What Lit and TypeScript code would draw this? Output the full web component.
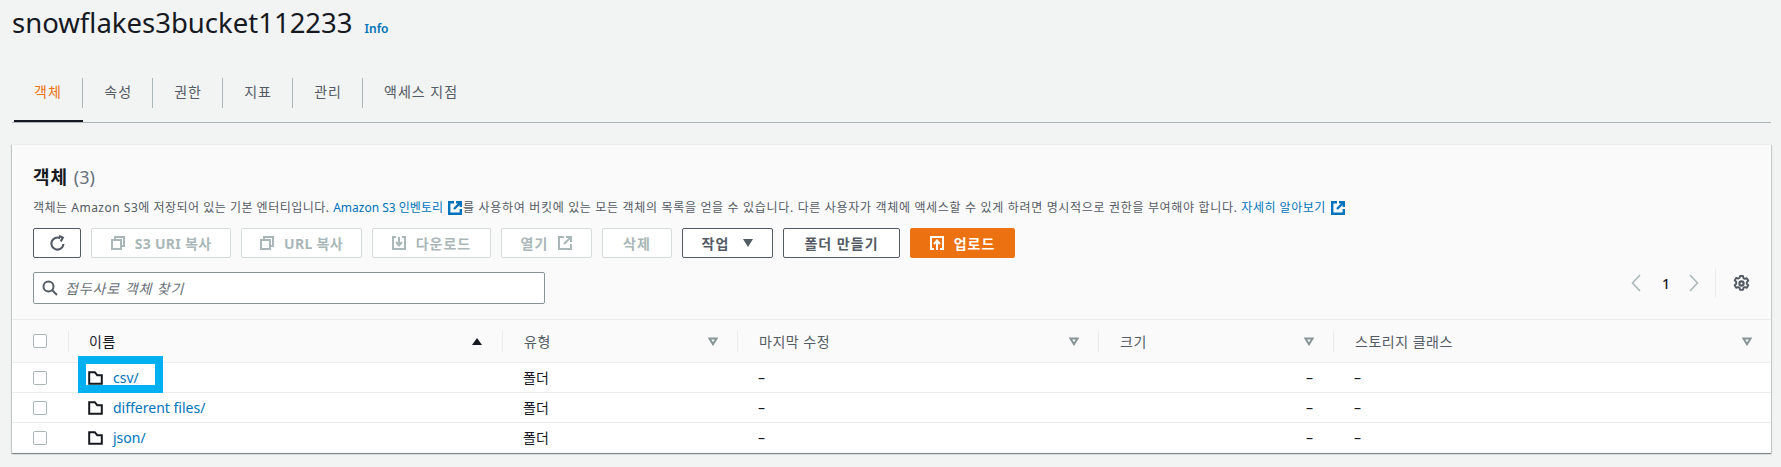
import { LitElement, html, css } from "lit";
import { customElement } from "lit/decorators.js";

const copyIcon = html`<svg class="ic" viewBox="0 0 14 14" fill="none" stroke="currentColor" stroke-width="2"><rect x="1" y="4" width="9" height="9"/><path d="M4 4V1h9v9h-3"/></svg>`;
const downloadIcon = html`<svg class="ic" viewBox="0 0 14 14" fill="none" stroke="currentColor" stroke-width="2"><path d="M4 1H1v12h12V1h-3"/><path d="M7 1v8M4 6l3 3.5L10 6"/></svg>`;
const extIcon = html`<svg class="ic" viewBox="0 0 14 14" fill="none" stroke="currentColor" stroke-width="2"><path d="M6 1H1v12h12V8"/><path d="M6 8l6.5-6.5M8 1h5v5"/></svg>`;
const extLink = html`<svg class="ext" viewBox="0 0 14 14" fill="none" stroke="currentColor" stroke-width="2.4"><path d="M6 1.2H1.2v11.6h11.6V8"/><path d="M6 8l6.5-6.5M8 1.2h4.8V6"/></svg>`;
const uploadIcon = html`<svg class="ic" viewBox="0 0 14 14" fill="none" stroke="currentColor" stroke-width="2"><path d="M4 13H1V1h12v12h-3"/><path d="M7 14V5M4 8l3-3.5L10 8"/></svg>`;
const folderIcon = html`<svg class="folder" viewBox="0 0 15 14" fill="none" stroke="currentColor" stroke-width="2"><path d="M1.2 1.2h5.6l2.4 3h4.6v8.6H1.2z" stroke-linejoin="miter"/></svg>`;
const filterIcon = html`<svg class="filter" viewBox="0 0 10 9" fill="none" stroke="currentColor" stroke-width="2"><path d="M1.5 1.5h7L5 7.2z"/></svg>`;

const tabs = ["객체", "속성", "권한", "지표", "관리", "액세스 지점"];
const rows = ["csv/", "different files/", "json/"];

@customElement("app-root")
export class AppRoot extends LitElement {
  static styles = css`
    :host {
      display: block;
      width: 1781px;
      height: 467px;
      overflow: hidden;
      box-sizing: border-box;
      padding: 0 10px 0 12px;
      background: #f2f3f3;
      color: #16191f;
      font-family: "Noto Sans", "Noto Sans CJK KR", sans-serif;
      font-size: 14px;
    }
    .title { display: flex; align-items: baseline; height: 78px; gap: 12px; padding-top: 3px; box-sizing: border-box; }
    h1 { margin: 0; font-size: 27.5px; font-weight: 400; line-height: 40px; }
    .info { font-size: 12px; font-weight: 600; color: #0073bb; }
    .tabs { display: flex; height: 44px; border-bottom: 1px solid #aab7b8; padding-left: 2px; }
    .tab { position: relative; height: 30px; line-height: 28px; padding: 0 19.7px 0 21.5px; border-right: 1px solid #aab7b8; color: #545b64; font-size: 14px; letter-spacing: 1px; white-space: nowrap; }
    .tab:first-child { padding: 0 20px; }
    .tab:last-child { border-right: none; }
    .tab.on { color: #ec7211; }
    .tab.on::after { content: ""; position: absolute; left: 0; right: -1px; top: 42px; height: 2px; background: #16191f; }
    .card { margin-top: 21px; height: 309px; background: #fafafa; box-shadow: 0 1px 1px rgba(0,28,36,.3), 1px 1px 1px rgba(0,28,36,.15), -1px 1px 1px rgba(0,28,36,.15); border-top: 1px solid #eaeded; box-sizing: border-box; }
    .head { padding: 20px 21px 0; height: 174px; box-sizing: border-box; }
    h2 { margin: 0; font-size: 18px; font-weight: 700; line-height: 24px; height: 24px; letter-spacing: 1px; }
    h2 span { font-weight: 400; color: #687078; letter-spacing: 0; }
    .desc { margin: 11px 0 0; font-size: 12px; line-height: 16px; color: #545b64; white-space: nowrap; height: 16px; letter-spacing: 0.5px; }
    .desc .tight { letter-spacing: 0; }
    .desc .wide { letter-spacing: .67px; }
    a { color: #0073bb; text-decoration: none; }
    .ext { width: 14px; height: 14px; color: #0073bb; vertical-align: -3px; margin: 0 1px 0 2px; }
    .btns { display: flex; gap: 10px; margin-top: 12px; }
    .btn { box-sizing: border-box; height: 30px; display: flex; align-items: center; justify-content: center; gap: 10px; border: 1px solid #545b64; border-radius: 2px; background: #fff; color: #545b64; font-size: 14px; font-weight: 700; white-space: nowrap; letter-spacing: 1px; }
    .btn.off { border-color: #d5dbdb; color: #aab7b8; }
    .btn.primary { background: #ec7211; border-color: #ec7211; color: #fff; }
    .btn.latin { letter-spacing: .3px; }
    .ic { width: 14px; height: 14px; flex: none; }
    .refresh { width: 17px; height: 17px; flex: none; }
    .tri { width: 0; height: 0; border-left: 5.5px solid transparent; border-right: 5.5px solid transparent; border-top: 8px solid #545b64; margin-left: 4px; }
    .w48 { width: 48px; } .w140 { width: 140px; } .w121 { width: 121px; } .w119 { width: 119px; } .w91 { width: 91px; } .w70 { width: 70px; } .w117 { width: 117px; } .w105 { width: 105px; }
    .find { display: flex; justify-content: space-between; margin-top: 14px; }
    .search { box-sizing: border-box; width: 512px; height: 32px; display: flex; align-items: center; gap: 7px; padding-left: 8px; background: #fff; border: 1px solid #879596; border-radius: 2px; color: #687078; font-style: italic; font-size: 14px; letter-spacing: .9px; }
    .search svg { width: 16px; height: 16px; color: #545b64; flex: none; }
    .pager { display: flex; align-items: center; height: 30px; margin-top: -4px; }
    .pager .chev { width: 10px; height: 18px; color: #aab7b8; }
    .pager b { font-weight: 500; font-size: 14px; width: 20px; text-align: center; margin: 0 13px 0 15px; }
    .pager i { width: 1px; height: 30px; background: #eaeded; margin: 0 17px 0 16px; }
    .gear { width: 17px; height: 17px; color: #545b64; }
    .row { display: grid; grid-template-columns: 56px 434px 235px 361px 235px 1fr; border-top: 1px solid #eaeded; box-sizing: border-box; align-items: center; }
    .row.hd { height: 43px; background: #fafafa; color: #545b64; }
    .row.body { height: 30px; background: #fff; color: #16191f; }
    .cb { box-sizing: border-box; width: 14px; height: 14px; border: 1px solid #aab7b8; border-radius: 2px; background: #fff; margin-left: 21px; }
    .th { display: flex; align-items: center; justify-content: space-between; height: 21px; padding: 0 19px 0 21px; border-left: 1px solid #eaeded; letter-spacing: .5px; }
    .th.dark { color: #16191f; padding: 0 20px; }
    .th .up { width: 0; height: 0; border-left: 5px solid transparent; border-right: 5px solid transparent; border-bottom: 7px solid #16191f; }
    .filter { width: 10px; height: 9px; color: #879596; }
    .td { padding: 0 0 2px 21px; white-space: nowrap; }
    .td.dash { padding: 0 0 0 21px; }
    .td.r { padding: 0 20px 0 0; text-align: right; }
    .name { position: relative; display: flex; align-items: center; gap: 10px; padding-left: 20px; height: 29px; }
    .name > * { position: relative; }
    .mark { position: absolute !important; left: 10px; top: -7px; width: 85px; height: 37px; box-sizing: border-box; border: 8px solid #00b0f0; background: #fff; }
    .folder { width: 15px; height: 14px; color: #16191f; flex: none; }
  `;

  render() {
    return html`
      <div class="title"><h1>snowflakes3bucket112233</h1><a class="info">Info</a></div>
      <div class="tabs">${tabs.map((t, i) => html`<div class="tab ${i === 0 ? "on" : ""}">${t}</div>`)}</div>
      <section class="card">
        <div class="head">
          <h2>객체 <span>(3)</span></h2>
          <p class="desc">객체는 Amazon S3에 저장되어 있는 기본 엔터티입니다. <a class="tight">Amazon S3 인벤토리 ${extLink}</a><span class="wide">를 사용하여 버킷에 있는 모든 객체의 목록을 얻을 수 있습니다. 다른 사용자가 객체에 액세스할 수 있게 하려면 명시적으로 권한을 부여해야 합니다. </span><a>자세히 알아보기 ${extLink}</a></p>
          <div class="btns">
            <div class="btn w48"><svg class="refresh" viewBox="0 0 16 16" fill="none" stroke="currentColor" stroke-width="2"><path d="M13.6 8.5A5.7 5.7 0 1 1 10.5 3"/><path d="M9.5 0.8 13 2.6 11 6"/></svg></div>
            <div class="btn off latin w140">${copyIcon}S3 URI 복사</div>
            <div class="btn off latin w121">${copyIcon}URL 복사</div>
            <div class="btn off w119">${downloadIcon}다운로드</div>
            <div class="btn off w91">열기${extIcon}</div>
            <div class="btn off w70">삭제</div>
            <div class="btn w91">작업<span class="tri"></span></div>
            <div class="btn w117">폴더 만들기</div>
            <div class="btn primary w105">${uploadIcon}업로드</div>
          </div>
          <div class="find">
            <div class="search"><svg viewBox="0 0 16 16" fill="none" stroke="currentColor" stroke-width="2"><circle cx="6.5" cy="6.5" r="5"/><path d="M10.5 10.5 15 15"/></svg>접두사로 객체 찾기</div>
            <div class="pager">
              <svg class="chev" viewBox="0 0 10 18" fill="none" stroke="currentColor" stroke-width="1.6"><path d="M9 1 1.5 9 9 17"/></svg>
              <b>1</b>
              <svg class="chev" viewBox="0 0 10 18" fill="none" stroke="currentColor" stroke-width="1.6"><path d="M1 1l7.5 8L1 17"/></svg>
              <i></i>
              <svg class="gear" viewBox="0 0 16 16" fill="none" stroke="currentColor"><circle cx="8" cy="8" r="2" stroke-width="2"/><path stroke-width="1.8" stroke-linejoin="round" d="M6.6 1h2.8l.4 1.9 1.3.7 1.9-.6 1.4 2.4-1.4 1.3v1.6l1.4 1.3-1.4 2.4-1.9-.6-1.3.7-.4 1.9H6.6l-.4-1.9-1.3-.7-1.9.6-1.4-2.4 1.4-1.3V6.4L1.6 5.1 3 2.7l1.9.6 1.3-.7z"/></svg>
            </div>
          </div>
        </div>
        <div class="row hd">
          <div class="cb"></div>
          <div class="th dark">이름<span class="up"></span></div>
          <div class="th">유형${filterIcon}</div>
          <div class="th">마지막 수정${filterIcon}</div>
          <div class="th">크기${filterIcon}</div>
          <div class="th">스토리지 클래스${filterIcon}</div>
        </div>
        ${rows.map((r, i) => html`
          <div class="row body">
            <div class="cb"></div>
            <div class="name">${i === 0 ? html`<span class="mark"></span>` : ""}${folderIcon}<a>${r}</a></div>
            <div class="td">폴더</div>
            <div class="td dash">–</div>
            <div class="td r">–</div>
            <div class="td dash">–</div>
          </div>`)}
      </section>
    `;
  }
}
